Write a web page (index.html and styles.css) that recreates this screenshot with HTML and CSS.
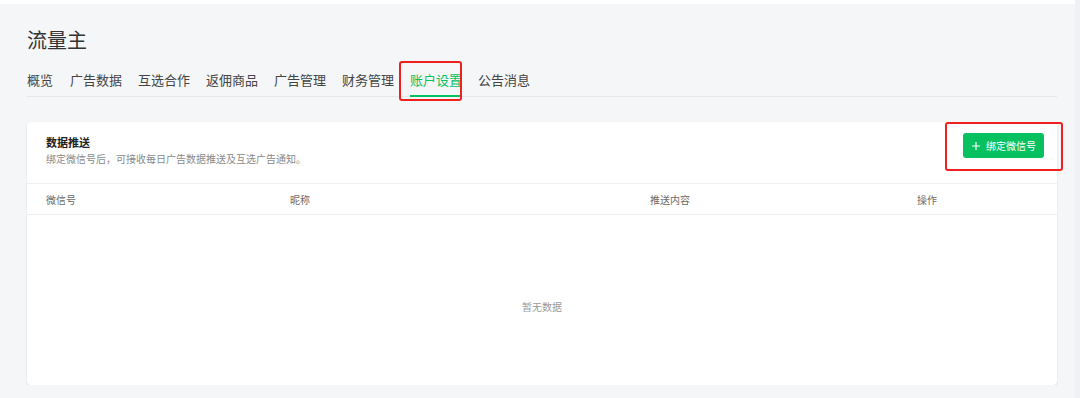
FILE: index.html
```html
<!DOCTYPE html>
<html lang="zh-CN">
<head>
    <meta charset="UTF-8">
    <meta name="viewport" content="width=device-width, initial-scale=1.0">
    <title>流量主</title>
    <link rel="stylesheet" href="styles.css">
</head>
<body>
    <div class="page">
        <h1 class="title">流量主</h1>

        <!-- Вкладки -->
        <div class="tabs">
            <span class="tab first">概览</span>
            <span class="tab">广告数据</span>
            <span class="tab">互选合作</span>
            <span class="tab">返佣商品</span>
            <span class="tab">广告管理</span>
            <span class="tab">财务管理</span>
            <span class="tab active marked">账户设置</span>
            <span class="tab">公告消息</span>
        </div>

        <div class="card">
            <div class="card-header">
                <div class="card-info">
                    <div class="card-title">数据推送</div>
                    <div class="card-desc">绑定微信号后，可接收每日广告数据推送及互选广告通知。</div>
                </div>
                <button type="button" class="btn marked">
                    <svg class="btn-icon" viewBox="0 0 8 8" width="8" height="8">
                        <path d="M4 0V8M0 4H8" stroke="#fff" stroke-width="1.2" fill="none"/>
                    </svg>
                    绑定微信号
                </button>
            </div>

            <div class="table-head">
                <span>微信号</span>
                <span>昵称</span>
                <span>推送内容</span>
                <span>操作</span>
            </div>
            <div class="empty">暂无数据</div>
        </div>
    </div>
    <div class="side-strip"></div>
</body>
</html>
```

FILE: styles.css
```css
body {
    margin: 0;
    background-color: #f5f6f8;
    font-family: "Noto Sans CJK SC", "Noto Sans", sans-serif;
    color: #333;
}

.page {
    border-top: 4px solid #fff;
    padding: 22px 23px 0 27px;
}

.title {
    margin: 0;
    font-size: 20px;
    line-height: 28px;
    font-weight: normal;
    color: #333;
}

/* Вкладки */
.tabs {
    display: flex;
    gap: 16px;
    margin-top: 16px;
    border-bottom: 1px solid #e6e7ea;
}

.tab {
    position: relative;
    font-size: 13px;
    line-height: 20px;
    padding-bottom: 5px;
    border-bottom: 2px solid transparent;
    margin-bottom: -1px;
    color: #444;
}

.tab.first {
    margin-right: 1px;
}

.tab.active {
    color: #07c160;
    border-bottom-color: #07c160;
}

/* Красная рамка-пометка */
.marked::after {
    content: "";
    position: absolute;
    border: 2px solid #f0201f;
    border-radius: 3px;
    pointer-events: none;
}

.tab.marked::after {
    left: -11px;
    right: 0;
    top: -9px;
    bottom: -6px;
}

.btn.marked::after {
    left: -18px;
    right: -19px;
    top: -11px;
    bottom: -13px;
}

/* Карточка */
.card {
    margin-top: 25px;
    width: 1030px;
    background-color: #fff;
    border-radius: 4px;
    box-shadow: 0 1px 2px rgba(0, 0, 0, 0.12);
}

.card-header {
    display: flex;
    justify-content: space-between;
    align-items: flex-start;
    padding: 11px 13px 16px 19px;
    border-bottom: 1px solid #eeeff1;
}

.card-info {
    margin-top: 1px;
}

.card-title {
    font-size: 11px;
    line-height: 16px;
    font-weight: bold;
    color: #222;
}

.card-desc {
    margin-top: 1px;
    font-size: 10px;
    line-height: 16px;
    color: #8a8a8a;
}

.btn {
    position: relative;
    display: flex;
    align-items: center;
    gap: 6px;
    width: 81px;
    height: 25px;
    padding: 0 0 0 9px;
    border: none;
    border-radius: 3px;
    background-color: #07c160;
    color: #fff;
    font-family: inherit;
    font-size: 10px;
}

.table-head {
    display: grid;
    grid-template-columns: 244px 360px 267px 1fr;
    padding-left: 19px;
    height: 30px;
    align-items: center;
    font-size: 10px;
    color: #6a6a6a;
    border-bottom: 1px solid #eeeff1;
}

.empty {
    padding: 84px 0 70px;
    line-height: 16px;
    font-size: 10px;
    color: #9a9a9a;
    text-align: center;
}

.side-strip {
    position: fixed;
    right: 0;
    top: 0;
    width: 5px;
    height: 100%;
    background-color: #f0f1f4;
}
```
